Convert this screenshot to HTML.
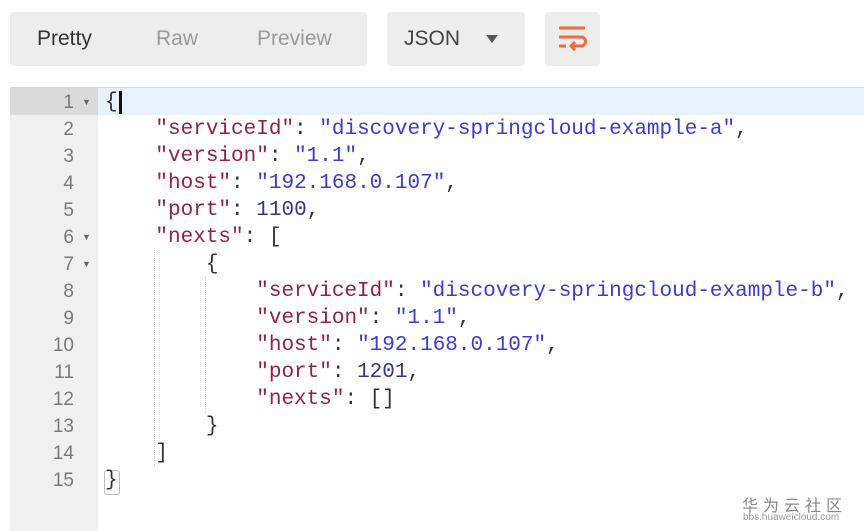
<!DOCTYPE html><html><head><style>
body{margin:0;width:864px;height:531px;background:#fff;position:relative;overflow:hidden;font-family:"Liberation Sans",sans-serif}
.box{position:absolute;background:#ededed;border-radius:4px;top:12px;height:54px}
.t{position:absolute;top:27px;font-size:21px;color:#9a9a9a}
#ed{position:absolute;left:10px;top:87px;right:0;bottom:0;border-top:1px solid #d8d8d8}
#gut{position:absolute;left:10px;top:88px;width:88px;bottom:0;background:#f0f0f0}
.ln{position:absolute;left:10px;width:64px;text-align:right;font-family:"Liberation Sans",sans-serif;font-size:19px;color:#7a7a7a;height:27px;line-height:27px}
.ar{position:absolute;left:82px;font-size:9px;color:#666;height:27px;line-height:27px}
.cl{position:absolute;left:105px;font-family:"Liberation Mono",monospace;font-size:21px;height:27px;line-height:27px;white-space:pre;color:#333}
.k{color:#92214a}.s{color:#3b3bd6}.n{color:#343494}
</style></head><body>
<div class="box" style="left:10px;width:357px"></div>
<div class="t" style="left:37px;color:#333">Pretty</div>
<div class="t" style="left:156px">Raw</div>
<div class="t" style="left:257px">Preview</div>
<div class="box" style="left:387px;width:138px"></div>
<div class="t" style="left:404px;color:#444">JSON</div>
<div style="position:absolute;left:486px;top:35px;width:0;height:0;border-left:6px solid transparent;border-right:6px solid transparent;border-top:8px solid #555"></div>
<div class="box" style="left:545px;width:55px"></div>
<svg style="position:absolute;left:557px;top:24px" width="32" height="30" viewBox="0 0 32 30"><g stroke="#f06a3a" stroke-width="3" fill="none"><path d="M2 4H28"/><path d="M2 13H24a4.5 4.5 0 0 1 0 9H15"/><path d="M2 22H9"/><path d="M18 18l-4 4 4 4"/></g></svg>
<div id="ed"></div><div id="gut"></div>
<div style="position:absolute;left:98px;top:88px;right:0;height:27px;background:#e8f2fe"></div>
<div style="position:absolute;left:10px;top:88px;width:88px;height:27px;background:#dadada"></div>
<div style="position:absolute;left:119px;top:91px;width:3px;height:23px;background:#111"></div>
<div style="position:absolute;left:154px;top:250px;height:217px;border-left:1px dotted #ccc"></div>
<div style="position:absolute;left:205px;top:277px;height:136px;border-left:1px dotted #ccc"></div>
<div style="position:absolute;left:104px;top:470px;width:14px;height:23px;border:1px solid #bbb;border-radius:3px"></div>
<div class="ln" style="top:89px">1</div><div class="ln" style="top:116px">2</div><div class="ln" style="top:143px">3</div><div class="ln" style="top:170px">4</div><div class="ln" style="top:197px">5</div><div class="ln" style="top:224px">6</div><div class="ln" style="top:251px">7</div><div class="ln" style="top:278px">8</div><div class="ln" style="top:305px">9</div><div class="ln" style="top:332px">10</div><div class="ln" style="top:359px">11</div><div class="ln" style="top:386px">12</div><div class="ln" style="top:413px">13</div><div class="ln" style="top:440px">14</div><div class="ln" style="top:467px">15</div>
<div class="ar" style="top:89px">▼</div><div class="ar" style="top:224px">▼</div><div class="ar" style="top:251px">▼</div>
<div class="cl" style="top:89px">{</div>
<div class="cl" style="top:116px">    <span class="k">"serviceId"</span>: <span class="s">"discovery-springcloud-example-a"</span>,</div>
<div class="cl" style="top:143px">    <span class="k">"version"</span>: <span class="s">"1.1"</span>,</div>
<div class="cl" style="top:170px">    <span class="k">"host"</span>: <span class="s">"192.168.0.107"</span>,</div>
<div class="cl" style="top:197px">    <span class="k">"port"</span>: <span class="n">1100</span>,</div>
<div class="cl" style="top:224px">    <span class="k">"nexts"</span>: [</div>
<div class="cl" style="top:251px">        {</div>
<div class="cl" style="top:278px">            <span class="k">"serviceId"</span>: <span class="s">"discovery-springcloud-example-b"</span>,</div>
<div class="cl" style="top:305px">            <span class="k">"version"</span>: <span class="s">"1.1"</span>,</div>
<div class="cl" style="top:332px">            <span class="k">"host"</span>: <span class="s">"192.168.0.107"</span>,</div>
<div class="cl" style="top:359px">            <span class="k">"port"</span>: <span class="n">1201</span>,</div>
<div class="cl" style="top:386px">            <span class="k">"nexts"</span>: []</div>
<div class="cl" style="top:413px">        }</div>
<div class="cl" style="top:440px">    ]</div>
<div class="cl" style="top:467px">}</div>
<div style="position:absolute;left:742px;top:492px;font-family:'Liberation Sans','Noto Sans CJK SC',sans-serif;font-size:16px;letter-spacing:5px;color:#888">华为云社区</div>
<div style="position:absolute;left:743px;top:512px;font-size:10px;color:#999">bbs.huaweicloud.com</div>
</body></html>
